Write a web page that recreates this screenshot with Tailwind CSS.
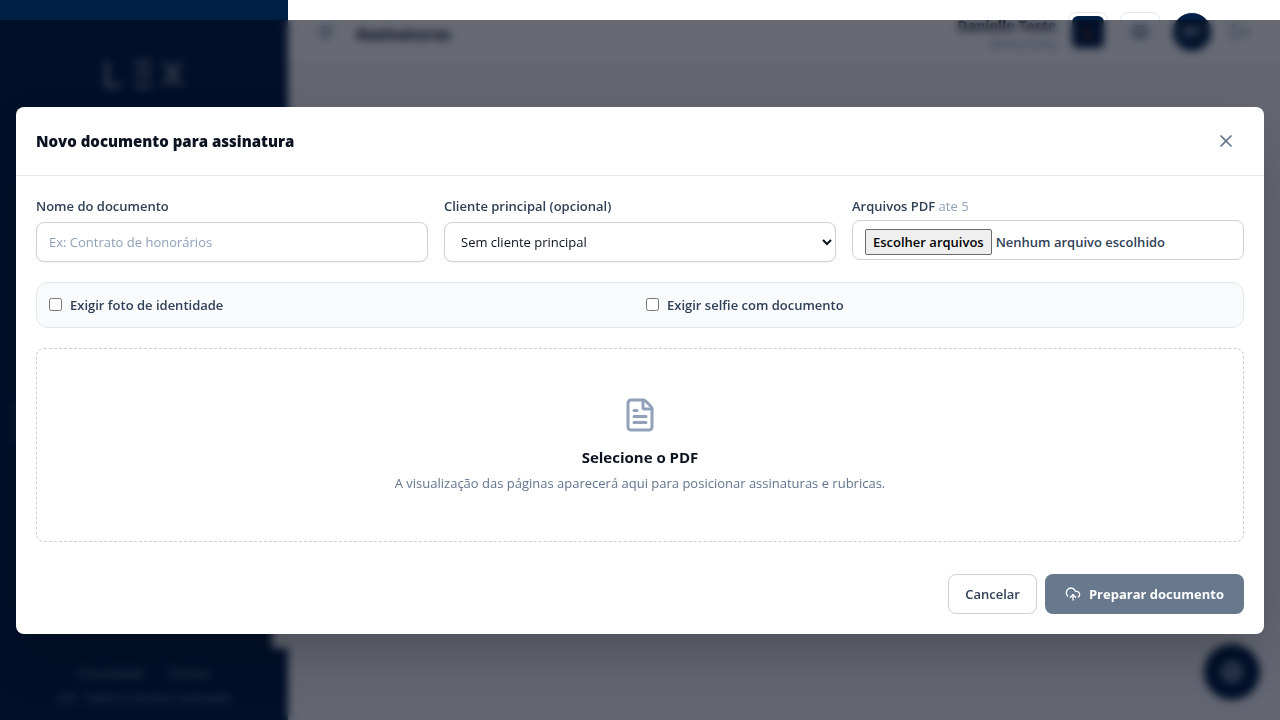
<!DOCTYPE html>
<html lang="pt-BR">
<head>
  <meta charset="UTF-8" />
  <meta name="viewport" content="width=device-width, initial-scale=1" />
  <title>Assinaturas</title>
  <script src="https://cdn.jsdelivr.net/npm/@tailwindcss/browser@4"></script>
</head>
<body class="bg-[#f4f4f7] text-[#0b1220] font-['Segoe_UI','Open_Sans','Noto_Sans',sans-serif] h-screen overflow-hidden">
  <div class="flex h-full">
    <!-- Sidebar -->
    <aside class="w-72 shrink-0 flex flex-col bg-[#001f44] text-white">
      <div class="h-37 flex items-center justify-center">
        <svg class="w-20 h-7" viewBox="0 0 80 28" fill="none" stroke="#868e9e" stroke-width="4" aria-label="Lex">
          <path d="M3 1v25h14" />
          <path d="M31 3h16M31 14h16M31 26h16" />
          <path d="M60 2l17 24M77 2L60 26" />
        </svg>
      </div>
      <nav class="flex-1 flex flex-col justify-center px-3 border-r-16 border-[#f4f4f7]">
        <a href="#" class="mt-12 h-11 px-4 flex items-center rounded-lg bg-white/10 text-sm font-semibold">Assinaturas</a>
      </nav>
      <div class="h-18 pt-4 text-center text-xs leading-5 text-slate-400">
        <div class="flex justify-center gap-6">
          <a href="#">Privacidade</a>
          <a href="#">Termos</a>
        </div>
        <p class="mt-1 text-[11px] leading-5">LEX · Todos os direitos reservados</p>
      </div>
    </aside>

    <div class="flex-1 flex flex-col">
      <header class="h-16 px-6 flex items-center gap-3 bg-white border-b border-slate-200">
        <button class="w-7 h-8 flex items-center justify-center text-slate-500" aria-label="Menu">
          <svg class="w-4 h-4" viewBox="0 0 24 24" fill="none" stroke="currentColor" stroke-width="3"><path d="M3 5h18M3 12h18M3 19h18" /></svg>
        </button>
        <h1 class="flex-1 ml-1 pt-1 text-base font-bold">Assinaturas</h1>
        <div class="pt-1 text-right">
          <p class="text-sm leading-5 font-bold">Danielle Teste</p>
          <p class="text-[11px] leading-4 text-slate-500">Minha Conta</p>
        </div>
        <button class="w-10 h-10 flex items-center justify-center rounded-lg border border-slate-200" aria-label="Aplicativo">
          <span class="w-8 h-8 flex items-center justify-center rounded-md bg-[#001f44] text-sm font-bold text-amber-700">L</span>
        </button>
        <button class="w-10 h-10 flex items-center justify-center rounded-lg border border-slate-200 text-slate-500" aria-label="Mensagens">
          <svg class="w-5 h-5" viewBox="0 0 24 24" fill="none" stroke="currentColor" stroke-width="2"><rect x="3" y="5" width="18" height="14" rx="2" /><path d="M3 13h18M8 5v14M16 5v14" /></svg>
        </button>
        <span class="w-10 h-10 flex items-center justify-center rounded-full border border-white bg-[#001f44] text-sm font-bold text-slate-300">DT</span>
        <button class="w-8 h-8 flex items-center justify-center text-slate-500" aria-label="Sair">
          <svg class="w-5 h-5" viewBox="0 0 24 24" fill="none" stroke="currentColor" stroke-width="2"><path d="M9 21H5a2 2 0 0 1-2-2V5a2 2 0 0 1 2-2h4M16 17l5-5-5-5M21 12H9" /></svg>
        </button>
      </header>
      <main class="flex-1"></main>
    </div>
  </div>

  <!-- Help bubble -->
  <button class="fixed right-5 bottom-5 w-14 h-14 flex items-center justify-center rounded-full bg-[#001f44] text-slate-400" aria-label="Ajuda">
    <svg class="w-6 h-6" viewBox="0 0 24 24" fill="none" stroke="currentColor" stroke-width="4"><circle cx="12" cy="12" r="9" /><path d="M8 10h8M8 14h8" /></svg>
  </button>

  <!-- Modal -->
  <div class="fixed inset-x-0 top-5 bottom-0 p-4 flex items-center justify-center bg-slate-950/60 backdrop-blur-xs">
    <section role="dialog" aria-modal="true" aria-labelledby="modal-title" class="w-full rounded-lg bg-white shadow-2xl">
      <div class="flex items-center justify-between px-5 py-4 border-b border-slate-200">
        <h2 id="modal-title" class="text-[15px] leading-6 font-extrabold">Novo documento para assinatura</h2>
        <button class="w-9 h-9 flex items-center justify-center rounded-lg text-slate-500 hover:bg-slate-100" aria-label="Fechar">
          <svg class="w-5 h-5" viewBox="0 0 24 24" fill="none" stroke="currentColor" stroke-width="2" stroke-linecap="round" stroke-linejoin="round"><path d="M18 6 6 18M6 6l12 12" /></svg>
        </button>
      </div>

      <form class="p-5">
        <div class="grid grid-cols-3 items-start gap-4 text-[13px] leading-5 font-semibold text-slate-700">
          <div>
            <label for="doc-name" class="block">Nome do documento</label>
            <input id="doc-name" type="text" placeholder="Ex: Contrato de honorários"
                   class="mt-1.5 block w-full h-10 px-3 rounded-lg border border-[#cbd0db] bg-white font-normal placeholder-slate-400 shadow-xs" />
          </div>
          <div>
            <label for="client" class="block">Cliente principal (opcional)</label>
            <select id="client" class="mt-1.5 block w-full h-10 px-3 rounded-lg border border-[#cbd0db] bg-white font-normal text-[#0b1220] shadow-xs">
              <option>Sem cliente principal</option>
            </select>
          </div>
          <div>
            <label for="files" class="block">Arquivos PDF <span class="font-normal text-slate-400">ate 5</span></label>
            <div class="relative mt-1 h-10 px-3 pt-1 flex items-center gap-1 rounded-lg border border-[#cbd0db] bg-white">
              <span class="px-[7px] py-0.5 rounded-xs border border-[#6b6b6b] bg-[#efefef] text-black">Escolher arquivos</span>
              <span>Nenhum arquivo escolhido</span>
              <input id="files" type="file" accept="application/pdf" multiple class="absolute inset-0 w-full h-full opacity-0 cursor-pointer" />
            </div>
          </div>
        </div>

        <div class="mt-5 grid grid-cols-2 gap-3 p-3 rounded-xl border border-slate-200 bg-slate-50 text-[13px] leading-5 font-semibold text-slate-700">
          <label class="flex items-center gap-2"><input type="checkbox" /> Exigir foto de identidade</label>
          <label class="flex items-center gap-2"><input type="checkbox" /> Exigir selfie com documento</label>
        </div>

        <div class="mt-5 py-12 flex flex-col items-center rounded-lg border border-dashed border-[#cbcfd6] text-center">
          <svg class="w-9 h-9 text-slate-400" viewBox="0 0 24 24" fill="none" stroke="currentColor" stroke-width="2" stroke-linecap="round" stroke-linejoin="round">
            <path d="M6 22a2 2 0 0 1-2-2V4a2 2 0 0 1 2-2h8a2.4 2.4 0 0 1 1.704.706l3.588 3.588A2.4 2.4 0 0 1 20 8v12a2 2 0 0 1-2 2z" />
            <path d="M14 2v5a1 1 0 0 0 1 1h5" />
            <path d="M10 9H8M16 13H8M16 17H8" />
          </svg>
          <h3 class="mt-3 text-[15px] leading-6 font-bold">Selecione o PDF</h3>
          <p class="mt-1 text-[13px] leading-5 text-slate-500">A visualização das páginas aparecerá aqui para posicionar assinaturas e rubricas.</p>
        </div>

        <div class="mt-8 flex justify-end gap-2 text-[13px] leading-5">
          <button type="button" class="h-10 px-4 rounded-lg border border-[#cbd0db] bg-white font-semibold text-slate-700">Cancelar</button>
          <button type="submit" class="h-10 px-5 flex items-center gap-2 rounded-lg bg-[#68788d] font-bold text-white">
            <svg class="w-4 h-4" viewBox="0 0 24 24" fill="none" stroke="currentColor" stroke-width="2" stroke-linecap="round" stroke-linejoin="round">
              <path d="M12 13v8" />
              <path d="M4 14.899A7 7 0 1 1 15.71 8h1.79a4.5 4.5 0 0 1 2.5 8.242" />
              <path d="m8 17 4-4 4 4" />
            </svg>
            Preparar documento
          </button>
        </div>
      </form>
    </section>
  </div>
</body>
</html>
